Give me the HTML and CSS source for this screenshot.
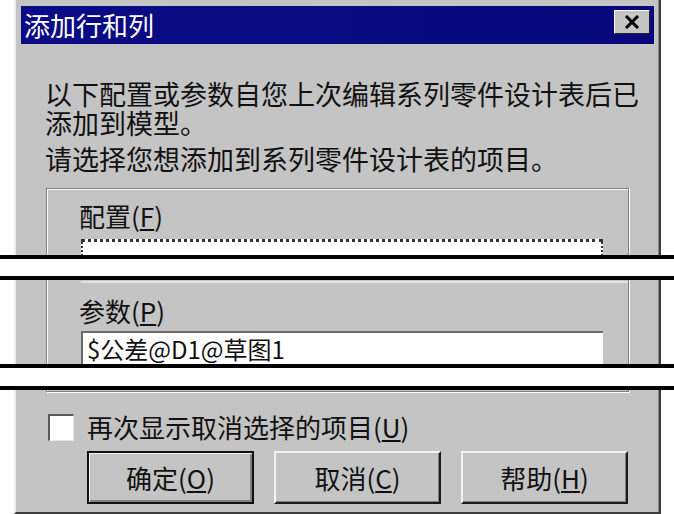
FILE: index.html
```html
<!DOCTYPE html>
<html lang="zh-CN">
<head>
    <meta charset="UTF-8">
    <title>添加行和列</title>
    <link rel="stylesheet" href="styles.css">
</head>
<body>
    <div class="page">
        <!-- Top part of the dialog -->
        <div class="dlg dlg-top">
            <div class="titlebar">
                <span class="title">添加行和列</span>
                <span class="close">
                    <svg width="16" height="14" viewBox="0 0 16 14">
                        <path d="M2 1 L14 13 M14 1 L2 13" stroke="#000" stroke-width="3"/>
                    </svg>
                </span>
            </div>
            <p class="msg">以下配置或参数自您上次编辑系列零件设计表后已<br>添加到模型。</p>
            <p class="msg msg-ask">请选择您想添加到系列零件设计表的项目。</p>
            <div class="group group-top">
                <div class="label">配置(<u>F</u>)</div>
                <div class="field field-focus"></div>
            </div>
        </div>

        <div class="break"></div>

        <!-- Middle part -->
        <div class="dlg dlg-mid">
            <div class="group group-mid">
                <div class="list-end"></div>
                <div class="label">参数(<u>P</u>)</div>
                <div class="field">$公差@D1@草图1</div>
            </div>
        </div>

        <div class="break break-2"></div>

        <!-- Bottom part -->
        <div class="dlg dlg-bottom">
            <div class="group group-bottom"></div>
            <label class="check">
                <span class="box"></span>
                <span>再次显示取消选择的项目(<u>U</u>)</span>
            </label>
            <div class="buttons">
                <button class="btn btn-default">确定(<u>O</u>)</button>
                <button class="btn">取消(<u>C</u>)</button>
                <button class="btn">帮助(<u>H</u>)</button>
            </div>
        </div>
    </div>
</body>
</html>
```

FILE: styles.css
```css
body {
    margin: 0;
    padding: 0;
    background: #fff;
    font-family: "Noto Sans CJK SC", "Liberation Sans", sans-serif;
    color: #111;
}

.page {
    width: 674px;
    height: 514px;
    overflow: hidden;
}

/* Dialog pieces */
.dlg {
    box-sizing: border-box;
    width: 647px;
    margin-left: 14px;
    background: #c4c4c4;
    border-left: 2px solid #ececec;
    border-right: 2px solid #3c3c3c;
    box-shadow: inset -1px 0 #8a8a8a;
    padding: 0 5px;
    overflow: hidden;
}

.dlg-top {
    height: 255px;
    padding-top: 6px;
}

.dlg-mid {
    height: 84px;
}

.dlg-bottom {
    height: 124px;
    border-bottom: 2px solid #3c3c3c;
}

/* Title bar */
.titlebar {
    height: 38px;
    display: flex;
    align-items: flex-start;
    justify-content: space-between;
    background: linear-gradient(90deg, #0b0b86, #08087c);
    padding: 0 4px 0 3px;
}

.title {
    color: #fff;
    font-size: 26px;
    line-height: 38px;
}

.close {
    width: 36px;
    height: 24px;
    margin-top: 4px;
    display: flex;
    align-items: center;
    justify-content: center;
    background: #c4c4c4;
    border-top: 1px solid #fff;
    border-left: 1px solid #fff;
    border-right: 1px solid #222;
    border-bottom: 1px solid #222;
    box-sizing: border-box;
}

/* Message text */
.msg {
    margin: 35px 0 0 24px;
    font-size: 27px;
    line-height: 29px;
}

.msg-ask {
    margin-top: 7px;
}

/* Group box */
.group {
    margin: 0 25px;
    padding: 0 23px 0 32px;
    border-left: 1px solid #808080;
    border-right: 1px solid #808080;
    box-shadow: inset 1px 0 #fff, 1px 0 #fff;
}

.group-top {
    margin-top: 15px;
    padding-top: 13px;
    border-top: 1px solid #808080;
    box-shadow: inset 1px 1px #fff, 1px 0 #fff;
}

.group-mid {
    padding-top: 1px;
}

.list-end {
    height: 2px;
    margin: 0 -23px 14px 2px;
    background: #e2e2e2;
}

.group-bottom {
    height: 1px;
    border-bottom: 1px solid #808080;
    box-shadow: inset 1px 0 #fff, 1px 1px #fff;
}

.label {
    font-size: 26px;
    line-height: 28px;
}

.field {
    margin: 6px 0 0 2px;
    width: 522px;
    height: 34px;
    box-sizing: border-box;
    background: #fff;
    border-top: 2px solid #6a6a6a;
    border-left: 2px solid #6a6a6a;
    padding: 2px 4px 0;
    font-size: 24px;
    line-height: 28px;
}

.field-focus {
    height: 40px;
    margin-top: 9px;
    border-top: 3px dotted #333;
    border-left: 2px dotted #333;
    border-right: 2px dotted #333;
}

/* Scan cut marks */
.break {
    height: 17px;
    background: #fff;
    border-top: 4px solid #000;
    border-bottom: 4px solid #000;
}

.break-2 {
    height: 18px;
}

/* Checkbox row */
.check {
    display: flex;
    align-items: center;
    margin: 21px 0 0 27px;
    font-size: 26px;
    line-height: 28px;
}

.box {
    width: 26px;
    height: 27px;
    box-sizing: border-box;
    background: #fff;
    border-top: 2px solid #5a5a5a;
    border-left: 2px solid #5a5a5a;
    border-right: 1px solid #e8e8e8;
    border-bottom: 1px solid #e8e8e8;
    margin-right: 13px;
}

/* Buttons */
.buttons {
    display: flex;
    gap: 20px;
    margin: 10px 0 0 66px;
}

.btn {
    width: 167px;
    height: 53px;
    font-family: inherit;
    font-size: 26px;
    color: #111;
    background: #c4c4c4;
    border-top: 2px solid #f4f4f4;
    border-left: 2px solid #f4f4f4;
    border-right: 2px solid #1a1a1a;
    border-bottom: 2px solid #1a1a1a;
    box-shadow: inset -1px -1px #808080;
    padding: 0;
}

.btn-default {
    border: 2px solid #111;
    box-shadow: inset 1px 1px #f4f4f4, inset -2px -2px #808080;
}
```
